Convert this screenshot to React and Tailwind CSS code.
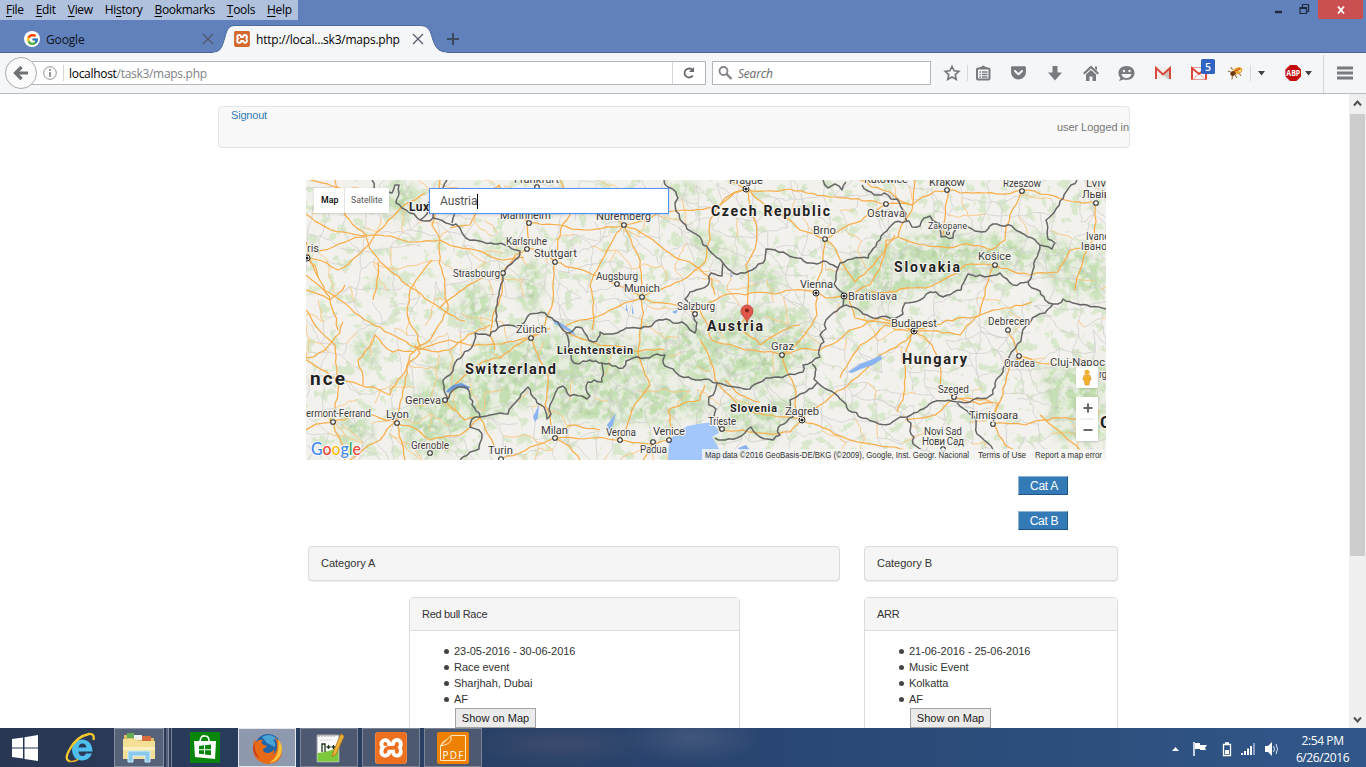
import React from "react";
import { FcGoogle } from "react-icons/fc";
import { SiXampp } from "react-icons/si";
import { FaGetPocket } from "react-icons/fa";

/* ---------- map data ---------- */

const makeRandom = (start) => {
  let seed = start;
  return () => {
    seed = (seed * 16807) % 2147483647;
    return seed / 2147483647;
  };
};

// Turns "x,y x,y ..." into a path whose segments are broken into small wobbling steps.
const wobble = (points, step, amount, rnd) => {
  const pts = points.split(" ").map((p) => p.split(",").map(Number));
  let d = `M${pts[0][0]} ${pts[0][1]}`;
  for (let i = 1; i < pts.length; i++) {
    const [ax, ay] = pts[i - 1];
    const [bx, by] = pts[i];
    const len = Math.hypot(bx - ax, by - ay) || 1;
    const n = Math.max(1, Math.round(len / step));
    const bow = (rnd() - 0.5) * Math.min(len * 0.16, 10);
    for (let k = 1; k <= n; k++) {
      const t = k / n;
      const off = k === n ? 0 : (rnd() - 0.5) * amount + bow * Math.sin(Math.PI * t);
      const x = ax + (bx - ax) * t - ((by - ay) / len) * off;
      const y = ay + (by - ay) * t + ((bx - ax) / len) * off;
      d += `L${x.toFixed(1)} ${y.toFixed(1)}`;
    }
  }
  return d;
};

const borderPoints = [
  "372,180 374,188 382,190 392,193 395,185 399,185 399,193 396,203 402,208 410,213 420,220 427,221 433,218 446,223 456,224 460,228 466,238 474,240 491,243 497,244 505,245 512,249 520,251 515,260 508,266 503,273 501,284 499,295 496,308 496,320 498,328",
  "447,180 443,188 436,193 432,200 428,207 424,217 420,220",
  "436,205 433,218",
  "455,213 453,218 452,223",
  "498,328 490,336 482,334 475,333 473,345 463,355 455,363 453,371 443,380 444,390 447,400 452,391 458,387 467,388 470,395 472,405 476,411 480,417 490,415 500,413 508,414 515,403 521,394 528,387 533,397 537,403 544,407 547,419 551,414 550,405 554,397 558,388 563,386 567,393 570,396 582,396 587,399 590,396 586,389 588,382 594,380 602,382 602,363 612,366 623,368 626,361 633,358 645,358 657,354 665,355 663,360 665,366 673,369 680,376 696,380 717,383 735,387 750,389 758,383 766,378 778,377 790,374 803,372 803,365 812,362 820,357 820,347 824,342 820,335 826,329 826,320 831,315",
  "480,417 472,419 470,427 479,430 482,438 479,449 470,452 463,457 460,460",
  "498,328 508,325 517,327 524,323 530,314 545,313 552,318 558,322 563,330 570,333 576,327 582,328 587,336 593,342 598,338 600,332 608,334 617,333 626,328 637,328 648,327 656,321 666,319 673,323 682,322 690,330 695,333 697,323 694,316 692,308 685,299 690,292 700,289 708,285 711,273 722,276 723,263",
  "566,333 569,343 570,352 574,363 579,364 583,361 590,360 596,361 602,363",
  "664,180 668,187 676,192 678,198 675,203 676,211 687,229 700,237 703,245 714,255 723,263 728,269 733,273 745,273 752,270 763,263 766,249 775,250 783,252 797,258 807,263 817,264 823,261 833,265 838,268 840,263 852,259 868,258 876,246 884,233 895,222 909,221 912,227 920,226 924,218 930,216 933,221 940,227 941,237 953,238 956,229 965,225 972,229 982,232 988,229 993,224 1012,226 1020,232 1028,237 1040,245 1052,249 1055,243 1048,239 1046,220 1060,201 1077,180",
  "823,180 828,188 835,184 842,190 846,182",
  "862,185 868,191 878,195 884,193 891,199 897,199 903,210 907,221",
  "838,268 836,280 834,284 840,291 844,297 843,306 837,311 831,315",
  "843,306 853,307 863,314 873,318 890,318 903,314 905,303 920,300 930,292 936,292 943,297 954,292 961,290 968,274 980,275 985,277 1000,273 1007,279 1013,285 1028,282 1033,270 1035,260 1040,245",
  "1028,282 1032,288 1040,291 1045,300 1053,304 1058,304 1063,299 1073,303 1087,305 1106,309",
  "1053,304 1045,313 1036,316 1031,321 1022,334 1016,347 1010,355 1005,365 1001,375 995,383 993,394 987,398 977,398 970,402 960,402 945,401 933,402 920,410 911,415 907,417 900,417 890,424 875,422 862,418 852,412 846,404 840,399 828,390 818,383 814,379 816,369 812,364",
  "717,383 715,391 709,397 709,405 716,409 714,417 718,425 723,431",
  "715,438 725,440 737,438 745,433 751,427 760,437 768,439 773,440 780,435 778,428 784,424 793,417 790,408 790,400 800,394 809,389 817,383",
  "907,417 911,423 910,431 914,437 913,444 920,449 930,452",
  "957,403 964,409 970,414 976,419 977,434 984,440 991,446 995,453",
];
const borderRandom = makeRandom(17);
const borders = borderPoints.map((p) => wobble(p, 4, 2.4, borderRandom));

const roadPoints = [
  "308,258 318,277 332,308 338,330", "306,242 318,277", "308,258 338,270 373,238 397,212 425,193", "366,237 380,262 440,308 465,321",
  "367,236 345,215 335,180", "308,252 350,240 367,236 402,240 440,240", "306,214 331,230 366,236", "378,262 376,290 373,300",
  "440,240 445,280 448,310 430,340 410,355 405,385 397,420 380,440 350,460", "440,240 432,225 436,205 440,180", "440,240 475,250 503,260 524,258",
  "440,308 475,282 503,273", "306,275 340,300 365,320 410,345 450,350 490,325", "306,360 335,378 360,385 390,395 405,372 420,353 415,345",
  "306,310 335,345 338,380 330,420 345,460", "397,423 365,412 333,422 306,430", "397,423 430,440 460,435 480,418", "397,423 405,460",
  "420,350 450,340 485,345 531,338", "420,350 418,335 408,318 410,290 432,260", "503,273 495,310 490,335 495,350", "503,273 515,255 528,248 527,223 536,187",
  "529,223 515,205 498,185", "529,223 560,225 590,230 624,225", "536,187 570,200 600,210 624,225", "528,248 555,262 600,276 642,297", "555,262 553,300 545,325 531,338",
  "555,262 558,240 570,215 560,180", "624,225 638,255 642,297", "624,225 665,250 690,262 712,280 715,295", "624,225 660,212 685,210 720,205 746,189",
  "624,225 605,255 590,285 592,330", "642,297 610,310 580,320 562,330", "642,297 672,304 695,314 720,297 745,295 775,294 816,292", "642,297 660,290 690,275 705,262",
  "642,297 640,330 638,352 650,385 632,410 620,440", "562,330 600,345 638,352 665,350", "746,189 774,213 800,230 825,239", "746,189 730,180", "746,189 725,198 710,220 705,262",
  "746,189 757,230 746,265 748,290 740,330", "746,189 790,189 835,197 886,204", "825,239 845,227 870,214 886,204", "825,239 822,270 816,292", "825,239 838,255 855,282 895,235",
  "816,292 826,298 844,296", "816,292 817,315 800,340 782,355", "782,355 745,350 712,340 700,310", "782,355 792,380 795,405 802,420", "782,355 820,350 850,330 880,318 914,331",
  "802,420 770,415 738,405 715,380 700,340", "802,420 820,405 848,385 880,355 914,331", "802,420 845,438 895,447 906,450", "802,420 790,432 760,433 720,430",
  "844,296 870,285 886,240 898,237", "844,296 855,318 880,322 914,331", "898,237 925,245 960,245 990,250 1005,240 1010,215 1022,191", "898,237 912,210 915,180",
  "886,204 912,205 935,191 948,190 985,193 1022,190 1065,200 1096,203", "948,190 945,218 943,235", "995,265 965,265 925,288 895,292 865,292",
  "995,265 985,295 980,315 960,335 914,331", "995,265 1030,275 1058,272 1070,250 1090,245", "914,331 935,325 970,318 1005,308 1032,302", "914,331 932,345 940,385 955,398 993,403",
  "914,331 905,365 903,400 897,412", "914,331 885,325 860,345 840,378", "955,398 935,415 905,420", "955,398 998,403 993,424 1025,425 1060,418 1090,420",
  "993,424 1003,395 1010,365 1019,356 1008,330", "1019,356 1060,365 1090,360", "993,424 1005,445 1025,455", "1095,203 1090,245 1075,290",
  "445,400 460,380 482,362 500,358 531,338 550,328", "445,400 465,420 480,418 497,450", "555,438 530,447 501,459", "555,438 590,438 620,440 669,440 690,428 720,430",
  "555,438 545,405 548,375 531,338", "555,438 580,460", "555,438 570,425 600,430", "669,440 668,410 700,400 705,385", "653,442 643,460", "725,380 740,395 760,402",
  "740,330 760,345 775,335 800,325", "500,185 480,200 470,225 450,228", "310,180 340,188 370,210", "1040,415 1058,430 1080,450", "860,180 890,192 912,205",
  "343,322 325,350 306,358", "345,285 330,300 306,290", "375,335 393,352 415,352", "375,335 358,360 363,385",
];
const roadRandom = makeRandom(53);
const roads = roadPoints.map((p) => wobble(p, 6, 2.2, roadRandom));

const minorRoads = (() => {
  const rnd = makeRandom(91);
  const cols = 47;
  const rows = 18;
  const nodes = Array.from({ length: rows }, (_, r) =>
    Array.from({ length: cols }, (_, c) => [300 + c * 17.8 + rnd() * 16, 175 + r * 17 + rnd() * 16])
  );
  const gray = [];
  const orange = [];
  const link = (a, b) => {
    const d = wobble(`${a[0]},${a[1]} ${b[0]},${b[1]}`, 5, 2.8, rnd);
    (rnd() < (a[0] < 560 || a[1] > 430 ? 0.3 : 0.11) ? orange : gray).push(d);
  };
  for (let r = 0; r < rows; r++) {
    for (let c = 0; c < cols; c++) {
      if (c + 1 < cols && rnd() < 0.66) link(nodes[r][c], nodes[r][c + 1]);
      if (r + 1 < rows && rnd() < 0.62) link(nodes[r][c], nodes[r + 1][c]);
      if (r + 1 < rows && c + 1 < cols && rnd() < 0.2) link(nodes[r][c], nodes[r + 1][c + 1]);
    }
  }
  return { gray: gray.join(""), orange: orange.join("") };
})();

// [text, x, baseline, width, size, bold]
const labels = [
  ["Czech Republic", 711, 215.5, 119, 14, 1],
  ["Slovakia", 894, 271.5, 66, 14, 1],
  ["Hungary", 902, 363.5, 65, 14.5, 1],
  ["Austria", 707, 331, 56, 14, 1],
  ["Switzerland", 465, 373.5, 91, 14.5, 1],
  ["Liechtenstein", 557, 354, 76, 10.8, 1],
  ["Slovenia", 730, 411.5, 47, 10.8, 1],
  ["nce", 310, 384.5, 35, 19, 1],
  ["Lux", 409, 210.5, 20, 12, 1],
  ["Frankfurt", 514, 183, 45, 11],
  ["Mannheim", 500, 219, 51, 11],
  ["Karlsruhe", 506, 244.5, 41, 10],
  ["Stuttgart", 534, 257, 43, 11.2],
  ["Strasbourg", 453, 276.5, 47, 10],
  ["Nuremberg", 596, 220, 55, 11.2],
  ["Augsburg", 596, 280, 42, 10],
  ["Munich", 624, 292, 36, 11.2],
  ["Salzburg", 677, 310, 38, 10],
  ["Prague", 729, 184, 34, 11.2],
  ["Brno", 813, 234, 23, 11.2],
  ["Vienna", 800, 288, 33, 11.2],
  ["Bratislava", 848, 300, 49, 11.2],
  ["Katowice", 864, 183, 44, 11.2],
  ["Kraków", 929, 185.5, 36, 11.2],
  ["Rzeszow", 1003, 187, 38, 10],
  ["Ostrava", 867, 217, 38, 11.2],
  ["Zakopane", 928, 229, 39, 9],
  ["Košice", 978, 260, 33, 11.2],
  ["Lviv", 1086, 187, 20, 11.2],
  ["Львів", 1082, 198, 28, 11],
  ["Ivano", 1086, 240, 24, 10],
  ["Івано", 1081, 249.5, 26, 10],
  ["ris", 307, 252, 12, 11.2],
  ["Zürich", 516, 332.5, 31, 11.2],
  ["Geneva", 405, 404, 36, 11.2],
  ["Lyon", 386, 418, 23, 11.2],
  ["ermont-Ferrand", 306, 417, 65, 10],
  ["Grenoble", 411, 448.5, 38, 10],
  ["Turin", 488, 454, 25, 11.2],
  ["Milan", 541, 434, 27, 11.2],
  ["Verona", 606, 436, 30, 10],
  ["Venice", 653, 435, 32, 11.2],
  ["Padua", 640, 452.5, 27, 10],
  ["Trieste", 708, 425, 28, 10],
  ["Zagreb", 785, 415, 34, 11.2],
  ["Graz", 771, 349.5, 23, 11.2],
  ["Budapest", 891, 327, 46, 11.2],
  ["Debrecen", 988, 325, 42, 10],
  ["Oradea", 1004, 366.5, 31, 10],
  ["Cluj-Napoc", 1050, 366, 55, 11.2],
  ["rg", 1099, 378, 8, 10],
  ["Szeged", 938, 393, 31, 10],
  ["Timișoara", 969, 419, 49, 11.2],
  ["Novi Sad", 924, 435, 38, 10],
  ["Нови Сад", 922, 444.5, 42, 10],
];

const towns = [
  [537, 187], [529, 223], [527, 249], [555, 262], [503, 273], [624, 225], [617, 284], [642, 297], [695, 314],
  [825, 239], [947, 190], [1022, 191], [886, 204], [948, 233, 1.5], [995, 265], [1096, 203], [531, 338], [445, 400],
  [397, 423], [333, 422], [430, 453], [501, 459], [555, 438], [620, 440], [669, 440], [653, 442], [722, 429],
  [782, 355], [1008, 330], [1019, 356], [954, 397], [993, 424], [943, 449],
];
const capitals = [[746, 189], [816, 293], [844, 296], [914, 331], [802, 420], [307, 258]];

function MapCanvas() {
  return (
    <svg viewBox="306 180 800 280" className="block h-[280px] w-[800px]">
      <defs>
        <filter id="sparse" x="0" y="0" width="1" height="1" colorInterpolationFilters="sRGB">
          <feTurbulence type="fractalNoise" baseFrequency="0.085" numOctaves="4" seed="8" />
          <feColorMatrix values="0 0 0 0 .82  0 0 0 0 .9  0 0 0 0 .76  11 0 0 0 -6.3" />
        </filter>
        <filter id="dense" x="0" y="0" width="1" height="1" colorInterpolationFilters="sRGB">
          <feTurbulence type="fractalNoise" baseFrequency="0.1" numOctaves="4" seed="4" />
          <feColorMatrix values="0 0 0 0 .77  0 0 0 0 .88  0 0 0 0 .7  7 0 0 0 -3.1" />
        </filter>
        <filter id="relief" x="0" y="0" width="1" height="1" colorInterpolationFilters="sRGB">
          <feTurbulence type="fractalNoise" baseFrequency="0.13" numOctaves="3" seed="2" />
          <feColorMatrix values="0 0 0 0 .55  0 0 0 0 .6  0 0 0 0 .52  5 0 0 0 -2.6" />
        </filter>
        <filter id="soft"><feGaussianBlur stdDeviation="5" /></filter>
        <mask id="hills" maskUnits="userSpaceOnUse" x="306" y="180" width="800" height="280">
          <g fill="#fff" filter="url(#soft)">
            <path d="M700 318l60-12 45 8 10 40-40 32-60 0-40-14-60 4-60 20-90 30-15 30-45-4 5-60 40-10 40-40 70-8 80 6z" />
            <path d="M560 390l60-15 70 12 25 25-60 10-60 2-50-10z" />
            <path d="M845 262l40-20 60-12 80 8 10 30-60 10-60 14-50 20-30-10z" />
            <path d="M1030 230l76 30 0 40-50-10zM1040 370l66-10v80l-50 0zM725 400l70 0-15 35-55 0z" />
            <ellipse cx="475" cy="308" rx="17" ry="24" />
            <ellipse cx="530" cy="285" rx="12" ry="25" />
            <ellipse cx="500" cy="248" rx="14" ry="9" />
            <ellipse cx="715" cy="250" rx="30" ry="10" transform="rotate(35 715 250)" />
            <ellipse cx="367" cy="350" rx="11" ry="20" />
            <ellipse cx="355" cy="432" rx="18" ry="14" />
            <ellipse cx="440" cy="375" rx="14" ry="17" />
            <ellipse cx="400" cy="200" rx="16" ry="20" />
            <ellipse cx="383" cy="285" rx="11" ry="7" />
            <ellipse cx="765" cy="280" rx="16" ry="12" />
            <ellipse cx="685" cy="190" rx="12" ry="8" />
          </g>
        </mask>
      </defs>
      <rect x="306" y="180" width="800" height="280" fill="#f3f1ed" />
      <rect x="306" y="180" width="800" height="280" filter="url(#sparse)" opacity=".75" />
      <g mask="url(#hills)">
        <rect x="306" y="180" width="800" height="280" fill="#e0ebd5" opacity=".6" />
        <rect x="306" y="180" width="800" height="280" filter="url(#dense)" />
        <rect x="306" y="180" width="800" height="280" filter="url(#relief)" opacity=".2" />
      </g>
      <g fill="none" strokeLinejoin="round">
        <path d={minorRoads.gray} stroke="#d2d0ce" strokeWidth="0.8" />
        <path d={minorRoads.orange} stroke="#f9c67f" strokeWidth="0.9" />
        {roads.map((d, i) => <path key={i} d={d} stroke="#f9ae4b" strokeWidth="1.25" />)}
      </g>
      <g fill="#8ab4f2">
        <path d="M668 460l1-20 8-7 10-7 18-3 7-1 5 6 2 5-7 4 9 15 13 8z" fill="#a3c7fb" />
        <path d="M446 391l7-6 8-2 9 4-2 3-8-3-7 2-5 4z" fill="#6d98dd" />
        <path d="M848 372l12-8 13-5 8-4 1 4-9 6-12 4-9 4z" />
        <path d="M552 319l9 4 12 8 3 5-10-6-11-6z" />
        <path d="M607 425l9-12-3 12-4 8zM533 417l4-8 2-5-1 14-3 4zM626 303l2 8-2 0zM632 305l2 9-2-1zM672 312l6-3-2 5zM730 272l3 5-2 0zM738 448l8-3 4 5-9 2z" />
      </g>
      {borders.map((d, i) => (
        <path key={i} d={d} fill="none" stroke="#666" strokeWidth="1.5" strokeLinejoin="round" />
      ))}
      {towns.map(([x, y, r]) => (
        <circle key={`${x}-${y}`} cx={x} cy={y} r={r || 2.3} fill="#fff" stroke="#333" strokeWidth="1.1" />
      ))}
      {capitals.map(([x, y]) => (
        <g key={`${x}-${y}`}>
          <circle cx={x} cy={y} r="3" fill="#fff" stroke="#222" />
          <circle cx={x} cy={y} r="1.6" fill="#222" />
        </g>
      ))}
      <g style={{ fontFamily: "Roboto, 'Noto Sans', sans-serif" }} stroke="#f7f5f1" strokeWidth="2" paintOrder="stroke" strokeLinejoin="round">
        {labels.map(([text, x, y, w, size, bold]) => (
          <text key={text} x={x} y={y} textLength={w} fontSize={size} fontWeight={bold ? 700 : 400} fill={bold ? "#222" : "#3c3c3c"}>
            {text}
          </text>
        ))}
        <text x="1100" y="428" fontSize="17" fontWeight="700" fill="#222">C</text>
      </g>
      <path d="M747 323c-.5-5-6-7-6-12a6 6 0 1 1 12 0c0 5-5.500 7-6 12z" fill="#e0564a" stroke="#b5453b" strokeWidth=".8" />
      <circle cx="747" cy="310.500" r="2" fill="#7d231b" />
    </svg>
  );
}

/* ---------- browser chrome ---------- */

const menus = [["", "F", "ile"], ["", "E", "dit"], ["", "V", "iew"], ["Hi", "s", "tory"], ["", "B", "ookmarks"], ["", "T", "ools"], ["", "H", "elp"]];

function Cross() {
  return <svg viewBox="0 0 12 12" className="size-3 shrink-0"><path d="M1 1l10 10M11 1L1 11" stroke="#51586a" strokeWidth="1.2" /></svg>;
}

function TitleBar() {
  return (
    <header className="relative flex h-[52px] shrink-0 flex-col bg-[#6081bb]">
      <div className="flex h-5 w-[298px] items-center gap-3 bg-[#b0c1de] pl-1.5 text-[12px] tracking-[-0.32px] text-black">
        {menus.map(([a, b, c]) => (
          <span key={b + c} className="whitespace-nowrap leading-5">{a}<u className="underline-offset-2">{b}</u>{c}</span>
        ))}
      </div>
      <div className="flex h-8 items-center">
        <div className="flex h-8 w-[213px] items-center pl-6 pt-[6px]">
          <span className="grid size-4 place-items-center rounded-full bg-white"><FcGoogle size={13} /></span>
          <span className="ml-1.5 flex-1 pt-px text-[12px] leading-4 tracking-[-0.15px] text-[#10131a]">Google</span>
          <span className="mr-[-1px] flex"><Cross /></span>
        </div>
        <div className="relative flex h-8 w-[233px] items-center pl-[21px] pt-[6px]">
          <svg viewBox="0 0 234 28" className="absolute left-0 top-[5px] h-7 w-[234px]">
            <path d="M0 27C8 27 9 22 12 12C14 4 16 .5 22 .5H207C214 .5 217 4 219 12C222 22 225 27 234 27V28H0z" fill="#f5f6f7" />
            <path d="M0 27C8 27 9 22 12 12C14 4 16 .5 22 .5H207C214 .5 217 4 219 12C222 22 225 27 234 27" fill="none" stroke="#4c6a9e" />
          </svg>
          <span className="relative grid size-4 place-items-center bg-white"><SiXampp size={16} color="#d4692f" /></span>
          <span className="relative ml-1.5 w-[145px] whitespace-nowrap pt-px text-[12px] leading-4 tracking-[-0.22px] text-black">http://local...sk3/maps.php</span>
          <span className="relative ml-[11px] flex"><Cross /></span>
        </div>
        <svg viewBox="0 0 12 12" className="ml-px mt-[6px] size-3"><path d="M6 0v12M0 6h12" stroke="#3c4a60" strokeWidth="2" /></svg>
      </div>
      <div className="absolute right-0 top-0 flex h-[19px] items-start">
        <svg viewBox="0 0 40 19" className="mr-1 h-[19px] w-10">
          <path d="M1 12h7" stroke="#1f2b3b" strokeWidth="2.4" />
          <path d="M26 7.500h6.500v6H26zM26 8.500h6.500M28.500 7V4.500h6v7h-2" fill="none" stroke="#1f2b3b" strokeWidth="1.2" />
        </svg>
        <div className="mr-[3px] grid h-[19px] w-[45px] place-items-center bg-[#c94f50]">
          <svg viewBox="0 0 8 8" className="size-2"><path d="M1 .5l6 7M7 .5l-6 7" stroke="#fff" strokeWidth="1.8" /></svg>
        </div>
      </div>
    </header>
  );
}

function ToolbarIcons() {
  return (
    <svg viewBox="940 53 426 40" className="ml-[9px] h-10 w-[426px] shrink-0">
      <g fill="#777b80">
        <path d="M952 66.500l2.100 4.300 4.700.6-3.500 3.200.9 4.700-4.200-2.300-4.200 2.300.9-4.700-3.500-3.200 4.700-.6z" fill="none" stroke="#777b80" strokeWidth="1.7" />
        <rect x="977" y="68.500" width="12.500" height="11" rx="1" fill="#f5f6f7" stroke="#777b80" strokeWidth="2" />
        <path d="M979.500 68.500v-1.500h1.800a2 2 0 0 1 3.900 0h1.800v1.500z" />
        <path d="M979.500 72h1.500m1 0h5.500M979.500 74.500h1.500m1 0h5.500M979.500 77h1.500m1 0h5.500" stroke="#777b80" strokeWidth="1.3" />
        <path d="M1052.500 66h5v6.500h4.500l-7 8-7-8h4.500z" />
        <path d="M1091 65.500l8 7.500-1.500 1.500-6.500-6-6.500 6-1.500-1.500zM1086 74.500l5-4.500 5 4.500V81h-3.500v-4.500h-3V81H1086zM1095 66.500h2v4l-2-2z" />
        <path d="M1126.500 66c5 0 8 3 8 7s-3 7-8 7c-1 0-2-.2-3-.5l-4.500 1.500 1.500-3c-1.200-1.300-2-3-2-5 0-4 3-7 8-7z" />
        <path d="M1337 66.500h16v3h-16zM1337 71.500h16v3h-16zM1337 76.500h16v3h-16z" />
      </g>
      <path d="M1121.500 74c.5 5.500 9.500 5.500 10 0z" fill="#f5f6f7" />
      <circle cx="1124" cy="71" r="1.200" fill="#f5f6f7" /><circle cx="1129.500" cy="71" r="1.200" fill="#f5f6f7" />
      <path d="M967.500 65v16M1250.500 65v16M1323.500 55v38" stroke="#d6d8da" />
      <path d="M1155 67h16v12h-16z" fill="#efeeea" /><path d="M1163 74l8-7v12h-3z" fill="#c8c6bd" />
      <path d="M1156 79V68l7 6.500 7-6.500v11" fill="none" stroke="#d9463c" strokeWidth="2" />
      <path d="M1191.500 67.500h15v12h-15z" fill="#fff" stroke="#e29c98" />
      <path d="M1192 79.500V68l7 6 7-6v11.500" fill="none" stroke="#db4237" strokeWidth="1.9" />
      <path d="M1193.500 79l4-4.500M1204.500 79l-4-4.500" fill="none" stroke="#e79a95" strokeWidth="1" />
      <rect x="1201" y="59" width="14" height="15" rx="1.5" fill="#3163c5" />
      <text x="1208" y="70.500" textAnchor="middle" fontSize="10.5" fontWeight="600" fill="#fff" fontFamily="Open Sans, sans-serif">5</text>
      <g transform="rotate(-25 1235 72)">
        <path d="M1231 70l-2-2M1231 74.500l-2 3M1234 75l0 3M1238 75l1 3M1234 69l-1-3" stroke="#8c632c" strokeWidth="1" />
        <ellipse cx="1238" cy="72" rx="4.800" ry="3.300" fill="#eda83a" /><ellipse cx="1232.500" cy="72.500" rx="2.700" ry="2.400" fill="#713b16" />
        <path d="M1235 71h6" stroke="#cf5f20" strokeWidth="1.4" /><circle cx="1240" cy="73" r="1" fill="#fff0a8" />
      </g>
      <path d="M1258 71h7l-3.500 4.500zM1305 71h7l-3.500 4.500z" fill="#3e4145" />
      <path d="M1290 65h6.500l4.500 4.600v6.800l-4.500 4.600h-6.500l-4.600-4.600v-6.800z" fill="#c40e0e" />
      <text x="1293.300" y="76.200" textAnchor="middle" textLength="14" lengthAdjust="spacingAndGlyphs" fontSize="8.8" fontWeight="700" fill="#fff" fontFamily="Open Sans, sans-serif">ABP</text>
      <foreignObject x="1010" y="64" width="18" height="18"><FaGetPocket size={17} color="#777b80" /></foreignObject>
    </svg>
  );
}

function Toolbar() {
  return (
    <div className="flex h-[42px] shrink-0 items-center border-b border-t border-b-[#b9bbbe] border-t-[#4c6491] bg-[#f5f6f7] text-[12px]">
      <div className="relative ml-[5px] grid size-8 shrink-0 place-items-center rounded-full border border-[#aaacb0] bg-[#fafafa]">
        <svg viewBox="0 0 16 16" className="size-4"><path d="M8.500 2L2.500 8l6 6M3 8h12" fill="none" stroke="#6e7276" strokeWidth="3.2" /></svg>
      </div>
      <div className="-ml-[5px] flex h-6 w-[674px] shrink-0 items-center border border-l-0 border-[#b5b7ba] bg-white">
        <svg viewBox="0 0 14 14" className="ml-[11px] size-3.5"><circle cx="7" cy="7" r="6.300" fill="none" stroke="#8d9094" /><path d="M7 3v2M7 6v5" stroke="#777" strokeWidth="1.5" /></svg>
        <span className="ml-1.5 h-4 w-px bg-[#d4d6d8]" />
        <span className="ml-[5px] flex-1 pt-px leading-4 tracking-[-0.3px] text-[#808285]"><span className="text-black">localhost</span>/task3/maps.php</span>
        <span className="h-[22px] w-px bg-[#d4d6d8]" />
        <svg viewBox="0 0 12 12" className="mx-2.5 size-3"><path d="M9.800 8.500A4.500 4.500 0 1 1 9 2.600" fill="none" stroke="#65696d" strokeWidth="1.8" /><path d="M11 0v5H6z" fill="#65696d" /></svg>
      </div>
      <div className="ml-1.5 flex h-6 w-[219px] shrink-0 items-center border border-[#b5b7ba] bg-white">
        <svg viewBox="0 0 16 16" className="ml-1 size-4"><circle cx="6.500" cy="6" r="4" fill="none" stroke="#808489" strokeWidth="1.8" /><path d="M9.500 9l5 5" stroke="#808489" strokeWidth="2.4" /></svg>
        <span className="ml-[5px] pt-px leading-4 tracking-[-0.2px] text-[#66696c] italic">Search</span>
      </div>
      <ToolbarIcons />
    </div>
  );
}

/* ---------- page ---------- */

function EventPanel({ title, items, width }) {
  return (
    <section className={`${width} h-[160px] shrink-0 rounded-sm border border-[#dcdcdc] bg-white shadow-[0_1px_1px_rgba(0,0,0,0.05)]`}>
      <h3 className="h-[33px] border-b border-[#dcdcdc] bg-[#f5f5f5] pl-3 leading-[33px] tracking-[-0.3px]">{title}</h3>
      <ul className="pl-[34px] pt-3 leading-4">
        {items.map((t) => (
          <li key={t} className="flex items-center gap-[5px] tracking-[-0.04px]"><span className="size-[5px] rounded-full bg-[#444]" />{t}</li>
        ))}
      </ul>
      <button className="ml-[45px] mt-px block h-[20px] w-[81px] border border-[#a3a3a3] bg-[#ebebeb] leading-[18px] text-[#222]">Show on Map</button>
    </section>
  );
}

function CategoryPanel({ title, width }) {
  return <div className={`${width} h-[35px] rounded-sm border border-[#dcdcdc] bg-[#f5f5f5] pl-3 leading-[33px] shadow-[0_1px_1px_rgba(0,0,0,0.08)]`}>{title}</div>;
}

function Page() {
  return (
    <main className="h-full w-[1349px] shrink-0 overflow-hidden bg-white pl-[218px] pt-3 font-['Liberation_Sans',Arial,sans-serif] text-[11px] text-[#333]">
      <nav className="flex h-[42px] w-[912px] justify-between rounded-sm border border-[#e5e5e5] bg-[#f8f8f8]">
        <a className="pl-3 pt-px leading-[14px] tracking-[-0.2px] text-[#337ab7]">Signout</a>
        <span className="pt-[13px] leading-[14px] tracking-[-0.05px] text-[#777]">user Logged in</span>
      </nav>
      <div className="relative ml-[88px] mt-8 h-[280px] w-[800px] overflow-hidden font-[Roboto,sans-serif]">
        <MapCanvas />
        <div className="absolute left-2 top-2 flex h-[25px] items-center bg-white text-[8.8px] shadow-sm">
          <b className="w-[30px] pl-[7px] font-medium text-black">Map</b>
          <span className="h-[25px] w-[45px] border-l border-[#e3e3e3] pl-1.5 leading-[25px] text-[#565656]">Satellite</span>
        </div>
        <div className="absolute left-[123px] top-2 flex h-[26px] w-[240px] items-center border border-[#4d90fe] bg-white pl-[10px] text-[12px] text-[#555] shadow-sm">
          <span className="tracking-[-0.1px]">Austria</span><span className="h-[15px] w-px bg-black" />
        </div>
        <div className="absolute bottom-[72px] right-2 grid size-[22px] place-items-center bg-white shadow-sm">
          <svg viewBox="0 0 12 18" className="h-[17px] w-3"><circle cx="6" cy="3.500" r="2.700" fill="#f2b12c" /><path d="M3 6.500h6l1.500 5h-1.500L8 17H4L3 11.500H1.500z" fill="#f2b12c" stroke="#d28c22" strokeWidth=".6" /></svg>
        </div>
        <div className="absolute bottom-[19px] right-2 flex h-11 w-[22px] flex-col items-center bg-white shadow-sm">
          <svg viewBox="0 0 22 44" className="h-11 w-[22px]"><path d="M7.500 11h9M12 6.500v9M7.500 33h9" stroke="#666" strokeWidth="2" /><path d="M4 22h14" stroke="#e2e2e2" /></svg>
        </div>
        <svg viewBox="0 0 52 20" className="absolute left-1 top-[260px] h-5 w-[52px]">
          <text x="1" y="15" textLength="50" lengthAdjust="spacingAndGlyphs" fontSize="17.5" fontWeight="500" fontFamily="Lato, sans-serif" stroke="#fff" strokeWidth="1.5" paintOrder="stroke">
            <tspan fill="#4285f4">G</tspan><tspan fill="#ea4335">o</tspan><tspan fill="#fbbc05">o</tspan><tspan fill="#4285f4">g</tspan><tspan fill="#34a853">l</tspan><tspan fill="#ea4335">e</tspan>
          </text>
        </svg>
        <svg viewBox="702 449 404 11" className="absolute bottom-0 right-0 h-[11px] w-[404px]">
          <rect x="702" y="449" width="404" height="11" fill="#f5f5f5" opacity=".82" />
          <g fontSize="8.3" fill="#333" fontFamily="Liberation Sans, sans-serif">
            <text x="705" y="458" textLength="264" lengthAdjust="spacingAndGlyphs">Map data ©2016 GeoBasis-DE/BKG (©2009), Google, Inst. Geogr. Nacional</text>
            <text x="978" y="458" textLength="48" lengthAdjust="spacingAndGlyphs">Terms of Use</text>
            <text x="1035" y="458" textLength="67" lengthAdjust="spacingAndGlyphs">Report a map error</text>
          </g>
        </svg>
      </div>
      <div className="ml-[800px] mt-4 flex w-[50px] flex-col gap-4 text-[12px] text-white">
        <button className="h-[19px] border border-[#1f5584] border-l-[#8fb4d6] border-t-[#8fb4d6] bg-[#337ab7] pl-0.5 leading-[18px] tracking-[-0.3px]">Cat A</button>
        <button className="h-[19px] border border-[#1f5584] border-l-[#8fb4d6] border-t-[#8fb4d6] bg-[#337ab7] pl-0.5 leading-[18px] tracking-[-0.3px]">Cat B</button>
      </div>
      <div className="ml-[90px] mt-4 flex gap-6">
        <CategoryPanel title="Category A" width="w-[532px]" />
        <CategoryPanel title="Category B" width="w-[254px]" />
      </div>
      <div className="ml-[191px] mt-4 flex gap-[124px]">
        <EventPanel title="Red bull Race" width="w-[331px]" items={["23-05-2016 - 30-06-2016", "Race event", "Sharjhah, Dubai", "AF"]} />
        <EventPanel title="ARR" width="w-[254px]" items={["21-06-2016 - 25-06-2016", "Music Event", "Kolkatta", "AF"]} />
      </div>
    </main>
  );
}

function Scrollbar() {
  return (
    <aside className="flex w-[17px] shrink-0 flex-col items-center justify-between bg-[#f0f0f0]">
      <div className="flex w-full flex-col items-center">
        <svg viewBox="0 0 17 20" className="h-5 w-[17px]"><path d="M5 11.500l3.500-4 3.500 4" fill="none" stroke="#505050" strokeWidth="2" /></svg>
        <div className="h-[442px] w-[15px] bg-[#cdcdcd]" />
      </div>
      <svg viewBox="0 0 17 17" className="h-[17px] w-[17px]"><path d="M5 6.500l3.500 4 3.500-4" fill="none" stroke="#505050" strokeWidth="2" /></svg>
    </aside>
  );
}

/* ---------- taskbar ---------- */

function Firefox() {
  return (
    <svg viewBox="0 0 32 32" className="size-8">
      <circle cx="17" cy="15" r="13" fill="#2165a8" />
      <path d="M11 5q8-5 15 2l-4 1q3 3 2 7l-8-4z" fill="#4aa4d5" />
      <path d="M4 6q0 3 1 4 3-3 7-2-2 2-1 4l5 2q-1 2-4 3 0 4 5 4 5-1 6-4 1 3-1 6 4-3 4-9 0-6-3-9 8 5 8 13 0 13-14 14Q3 31 2 17q0-6 2-11z" fill="#e96a16" />
      <path d="M27 7q4 5 4 10-1 12-13 14 8-5 9-13 1-6 0-11z" fill="#f8c23c" />
      <path d="M4 10q-2 10 5 16-6-1-7-9 0-4 2-7z" fill="#c8371b" />
    </svg>
  );
}

function Xampp() {
  return <span className="grid size-8 place-items-center rounded bg-white"><SiXampp size={32} color="#ec701f" /></span>;
}

function TaskButton({ active, children }) {
  return (
    <div className={`grid h-[39px] w-[58px] shrink-0 place-items-center border ${active ? "border-[#e4e8ee] bg-[#8e99ad]" : "border-[#7d8595] bg-[#4d5971]"}`}>
      {children}
    </div>
  );
}

function Taskbar() {
  return (
    <footer className="flex h-[39px] shrink-0 items-center bg-linear-to-r from-[#293752] via-[#28446f] to-[#315789] text-white">
      <svg viewBox="0 0 26 26" className="ml-3 size-[26px]"><path d="M0 4l11-1.600v10H0zM12.500 2.200L26 0v12.400H12.500zM0 13.500h11V23.500L0 22zM12.500 13.500H26V26l-13.500-2z" fill="#fff" /></svg>
      <svg viewBox="0 0 32 32" className="ml-[27px] size-8">
        <path d="M27 21.500q-3 7-10 7-9.500-.5-10-10.500.5-10 10-10.500 10 .5 10.500 12H13.500q.5 4.500 4 4.500 2.500 0 3.500-2.500zM13.500 15.500h8q-.5-4-4-4-3.500 0-4 4z" fill="#4fbff0" fillRule="evenodd" />
        <path d="M5 29.500Q-1 28 4 18.500 11 4.500 24 2q6-.5 4.500 6" fill="none" stroke="#f4c72c" strokeWidth="2.3" />
        <path d="M5 29.500q4 .5 8-2" fill="none" stroke="#e6ae20" strokeWidth="1.5" />
      </svg>
      <div className="ml-[17px] flex h-[39px] w-[58px] gap-0.5">
        <div className="grid h-full w-[50px] place-items-center border border-[#8791a2] bg-[#56627a]">
          <svg viewBox="0 0 34 31" className="h-[31px] w-[34px]">
            <path d="M2 3h12l2 3h16v20H2z" fill="#dfbb62" /><path d="M5 1h7v5H5z" fill="#65aa54" /><path d="M12 3h8v5h-8z" fill="#efefef" /><path d="M20 4h9v5h-9z" fill="#d96c3d" />
            <path d="M1 7h13l2 2h17v18H1z" fill="#f4df96" /><path d="M1 15h32v3H1z" fill="#fff0bb" />
            <path d="M6 19h22v11h-5v-6H11v6H6z" fill="#8bcaea" stroke="#d0effb" />
          </svg>
        </div>
        <span className="h-full w-[3px] border-r border-[#8791a2] bg-[#56627a]" />
        <span className="h-full w-px bg-[#7d8595]" />
      </div>
      <svg viewBox="0 0 30 31" className="ml-[18px] h-[31px] w-[30px]">
        <path d="M0 0h30v31H0z" fill="#08860b" /><path d="M4 9h22l-1 18-20-2z" fill="#fff" /><path d="M10 9q1-6 5-5 4 0 4 5" fill="none" stroke="#fff" strokeWidth="1.6" />
        <path d="M9 14l5-.7v4H9zM15 13.200l6-.8v4.900h-6zM9 18.300h5v4l-5-.6zM15 18.300h6v5l-6-.8z" fill="#08860b" />
      </svg>
      <div className="ml-[18px] flex gap-1">
        <TaskButton active><Firefox /></TaskButton>
        <TaskButton>
          <svg viewBox="0 0 30 32" className="h-8 w-[30px]">
            <path d="M3 3h22v27H3z" fill="#fafafa" stroke="#999" /><path d="M3.500 21q11-1 21-6v14.500h-21z" fill="#7cc93b" /><path d="M5 2v3m3-3v3m3-3v3m3-3v3m3-3v3m3-3v3" stroke="#999" /><path d="M6 8h12" stroke="#ddd" />
            <path d="M8 20v-8h3v8M12.500 15h4m-2-2v4M17.500 15h4m-2-2v4" fill="none" stroke="#20331a" strokeWidth="1.3" />
            <path d="M18 25l2-7L27 2l3 2-8 18z" fill="#edb638" stroke="#c07d26" />
          </svg>
        </TaskButton>
        <TaskButton><Xampp /></TaskButton>
        <TaskButton>
          <svg viewBox="0 0 32 32" className="size-8">
            <rect width="32" height="32" rx="2" fill="#ee8100" />
            <path d="M14 3.500h14.500v25h-25V14L14 3.500v5q-2 4-10.500 5.500 2-5 6-6.500" fill="none" stroke="#ffe8c5" />
            <rect x="3" y="17" width="26" height="12" fill="#ee8100" />
            <path d="M3.500 16v12.500h25V16" fill="none" stroke="#ffe8c5" />
            <text x="5.500" y="26.500" textLength="21" fontSize="10" fill="#fff" fontFamily="Open Sans, sans-serif">PDF</text>
          </svg>
        </TaskButton>
      </div>
      <div className="h-full flex-1 bg-[radial-gradient(ellipse_90px_22px_at_80px_16px,#5c587066,transparent),radial-gradient(ellipse_70px_26px_at_210px_10px,#6b719066,transparent)]" />
      <svg viewBox="1168 728 114 39" className="h-[39px] w-[114px]">
        <path d="M1172 751l3.500-4 3.500 4z" fill="#fff" />
        <path d="M1194 742v14" stroke="#fff" strokeWidth="1.5" /><path d="M1195 743h5v2h7l-2 3 1 2h-6v-1h-5z" fill="#fff" />
        <path d="M1223.500 744.500h7v11h-7zM1225 743h4" fill="none" stroke="#fff" strokeWidth="1.3" /><path d="M1225 750h4v4h-4z" fill="#fff" />
        <path d="M1242 753v2M1245 751v4M1248 748.500v6.500M1251 746v9" stroke="#fff" strokeWidth="2" /><path d="M1254 743v12" stroke="#8ba0c0" strokeWidth="2" />
        <path d="M1265 746h3l4-4v14l-4-4h-3z" fill="#fff" /><path d="M1273.500 746q2 3 0 6M1276 744q3 5 0 10" fill="none" stroke="#dbe4f1" />
      </svg>
      <div className="flex w-[84px] flex-col items-center pr-[3px] pt-0.5 text-[12px] leading-[17px] tracking-[-0.4px]">
        <span>2:54 PM</span><span>6/26/2016</span>
      </div>
    </footer>
  );
}

export default function App() {
  return (
    <div className="flex h-[767px] w-[1366px] flex-col overflow-hidden font-['Open_Sans','Noto_Sans',sans-serif]">
      <TitleBar />
      <Toolbar />
      <div className="flex min-h-0 flex-1">
        <Page />
        <Scrollbar />
      </div>
      <Taskbar />
    </div>
  );
}
